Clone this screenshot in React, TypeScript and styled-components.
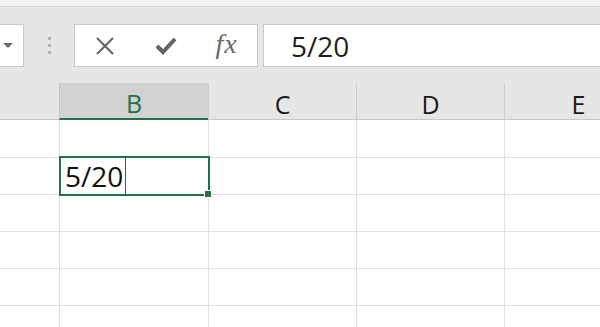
import React from "react";
import styled, { createGlobalStyle } from "styled-components";

const GlobalStyle = createGlobalStyle`
  html, body {
    margin: 0;
    padding: 0;
    background: #ffffff;
    font-family: "Open Sans", "Liberation Sans", sans-serif;
  }
`;

const Shell = styled.div`
  width: 600px;
  height: 327px;
  overflow: hidden;
  background: #ffffff;
`;

const TopStrip = styled.div`
  height: 6px;
  background: #f3f3f3;
  border-bottom: 1px solid #d6d6d6;
`;

const Toolbar = styled.div`
  display: flex;
  align-items: flex-start;
  box-sizing: border-box;
  height: 76px;
  padding-top: 17px;
  background: #e6e6e6;
`;

const NameBox = styled.div`
  box-sizing: border-box;
  width: 24px;
  height: 43px;
  display: flex;
  align-items: center;
  padding-left: 3px;
  background: #ffffff;
  border: 1px solid #c9c9c9;
  border-left: none;
`;

const Arrow = styled.div`
  width: 0;
  height: 0;
  border-left: 5px solid transparent;
  border-right: 5px solid transparent;
  border-top: 5px solid #6a6a6a;
`;

const Grip = styled.div`
  display: flex;
  flex-direction: column;
  gap: 4px;
  margin-left: 24px;
  margin-top: 13px;
`;

const GripDot = styled.span`
  width: 3px;
  height: 3px;
  background: #b3b3b3;
`;

const FxButtons = styled.div`
  box-sizing: border-box;
  width: 184px;
  height: 43px;
  margin-left: 23px;
  display: grid;
  grid-template-columns: repeat(3, 1fr);
  align-items: center;
  justify-items: center;
  background: #ffffff;
  border: 1px solid #c9c9c9;
`;

const FxLabel = styled.span`
  font-family: "Liberation Serif", "DejaVu Serif", serif;
  font-style: italic;
  font-size: 28px;
  color: #6a6a6a;
  letter-spacing: 1px;
  margin-top: -4px;
`;

const FormulaInput = styled.div`
  box-sizing: border-box;
  flex: 1;
  height: 43px;
  margin-left: 5px;
  padding-left: 27px;
  display: flex;
  align-items: center;
  background: #ffffff;
  border: 1px solid #c9c9c9;
  border-right: none;
  font-size: 28px;
  color: #1e1e1e;
`;

const Grid = styled.div`
  display: grid;
  grid-template-columns: 59px 149px 148px 148px 148px;
  grid-template-rows: 37px 38px repeat(5, 37px);
`;

const Corner = styled.div`
  box-sizing: border-box;
  background: #e6e6e6;
  border-bottom: 1px solid #c6c6c6;
`;

const ColHeader = styled.div<{ $selected?: boolean }>`
  box-sizing: border-box;
  display: flex;
  align-items: center;
  justify-content: center;
  padding-top: 5px;
  font-size: 25px;
  background: ${(p) => (p.$selected ? "#d2d2d2" : "#e6e6e6")};
  color: ${(p) => (p.$selected ? "#217346" : "#1a1a1a")};
  border-left: 1px solid ${(p) => (p.$selected ? "#c2c2c2" : "#cdcdcd")};
  border-bottom: ${(p) => (p.$selected ? "2px solid #217346" : "1px solid #c6c6c6")};
`;

const RowHead = styled.div`
  box-sizing: border-box;
  background: #ffffff;
  border-bottom: 1px solid #e1e1e1;
`;

const Cell = styled.div<{ $active?: boolean }>`
  position: relative;
  z-index: ${(p) => (p.$active ? 2 : 0)};
  box-sizing: border-box;
  display: flex;
  align-items: center;
  padding-left: 5px;
  font-size: 28px;
  color: #111111;
  background: #ffffff;
  border-left: 1px solid #e1e1e1;
  border-bottom: 1px solid #e1e1e1;

  ${(p) =>
    p.$active &&
    `
    &::after {
      content: "";
      position: absolute;
      top: -2px;
      left: -1px;
      right: -2px;
      bottom: -2px;
      border: 2px solid #217346;
      pointer-events: none;
    }
  `}
`;

const Caret = styled.span`
  align-self: stretch;
  width: 1px;
  margin-left: 2px;
  background: #505050;
`;

const FillHandle = styled.span`
  position: absolute;
  right: -4px;
  bottom: -4px;
  width: 6px;
  height: 6px;
  background: #217346;
  border: 1px solid #ffffff;
  z-index: 3;
`;

const CancelIcon = () => (
  <svg width="20" height="18" viewBox="0 0 20 18">
    <path d="M2 1 L18 17 M18 1 L2 17" stroke="#626262" strokeWidth="2" fill="none" />
  </svg>
);

const EnterIcon = () => (
  <svg width="22" height="18" viewBox="0 0 22 18">
    <path d="M2 9 L8 15 L20 2" stroke="#626262" strokeWidth="4" fill="none" />
  </svg>
);

const columns = ["B", "C", "D", "E"];
const rowCount = 6;

export default function App() {
  const rows = [];
  for (let r = 0; r < rowCount; r++) {
    rows.push(<RowHead key={`h${r}`} />);
    columns.forEach((col) => {
      const active = r === 1 && col === "B";
      rows.push(
        <Cell key={`${col}${r}`} $active={active}>
          {active && (
            <>
              5/20
              <Caret />
              <FillHandle />
            </>
          )}
        </Cell>
      );
    });
  }

  return (
    <Shell>
      <GlobalStyle />
      <TopStrip />
      <Toolbar>
        <NameBox>
          <Arrow />
        </NameBox>
        <Grip>
          <GripDot />
          <GripDot />
          <GripDot />
        </Grip>
        <FxButtons>
          <CancelIcon />
          <EnterIcon />
          <FxLabel>fx</FxLabel>
        </FxButtons>
        <FormulaInput>5/20</FormulaInput>
      </Toolbar>
      <Grid>
        <Corner />
        {columns.map((c) => (
          <ColHeader key={c} $selected={c === "B"}>
            {c}
          </ColHeader>
        ))}
        {rows}
      </Grid>
    </Shell>
  );
}
